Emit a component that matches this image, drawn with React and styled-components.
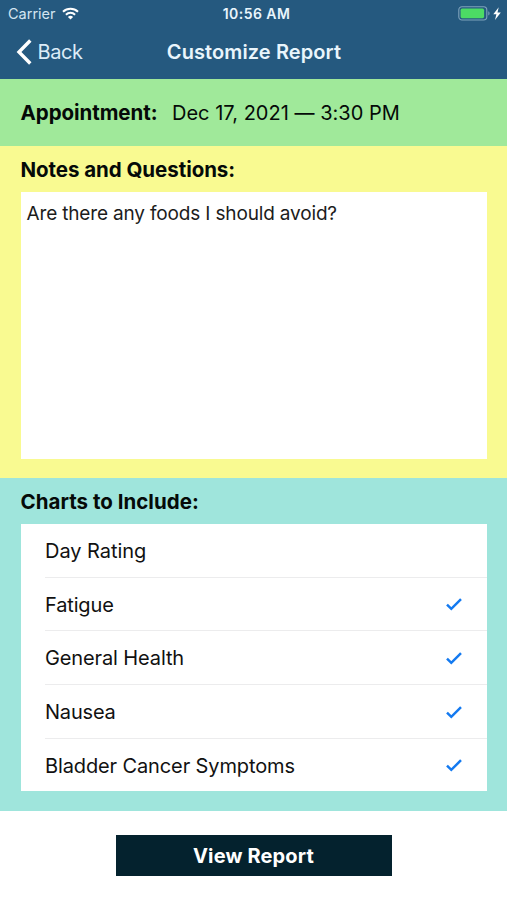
import React from 'react'
import styled, { createGlobalStyle } from 'styled-components'

const GlobalStyle = createGlobalStyle`
  * {
    box-sizing: border-box;
  }

  body {
    margin: 0;
    background: #fff;
    color: #050a08;
    font-family: Inter, 'Liberation Sans', sans-serif;
    font-size: 20px;
  }
`

const Screen = styled.div`
  display: flex;
  flex-direction: column;
  width: 507px;
  height: 900px;
  overflow: hidden;
`

// header
const Header = styled.header`
  height: 79px;
  background: #25597f;
  color: #e9f5fc;
`
const StatusBar = styled.div`
  display: grid;
  grid-template-columns: 1fr auto 1fr;
  align-items: center;
  height: 27px;
  padding: 0 5px 0 8px;
  font-size: 14.5px;
`
const Carrier = styled.div`
  display: flex;
  align-items: center;
  gap: 6px;
  color: #d3e5f1;
  letter-spacing: 0;
`
const Clock = styled.div`
  padding-left: 3px;
  font-weight: 600;
  font-size: 14px;
  letter-spacing: 0.45px;
`
const Power = styled.div`
  display: flex;
  justify-content: flex-end;
`
const NavBar = styled.div`
  display: grid;
  grid-template-columns: 1fr auto 1fr;
  align-items: center;
  height: 50px;
  padding: 0 16px;
`
const BackButton = styled.button`
  display: flex;
  align-items: center;
  gap: 5.5px;
  padding: 0;
  border: 0;
  background: none;
  color: #dcecf7;
  font: inherit;
  letter-spacing: -0.4px;
`
const Title = styled.h1`
  margin: 0;
  padding-left: 1px;
  font-size: 20px;
  font-weight: 600;
  letter-spacing: 0.1px;
`

// sections
const Band = styled.section`
  height: ${p => p.$height}px;
  padding: 0 20px 0 20.5px;
  background: ${p => p.$color};
`
const AppointmentBand = styled(Band)`
  display: flex;
  align-items: center;
  gap: 14.5px;
`
const Heading = styled.h2`
  margin: 0;
  padding-top: 1.5px;
  font-size: 20.5px;
  font-weight: 700;
  line-height: 44px;
  letter-spacing: ${p => p.$tracking || 0}px;
  white-space: nowrap;
`
const AppointmentDate = styled.span`
  letter-spacing: 0.02px;
  white-space: nowrap;
`
const Notes = styled.div`
  height: 267.5px;
  padding: 9px 6px;
  background: #fff;
  color: #1c1c1c;
  font-size: 19px;
  line-height: 25px;
  letter-spacing: -0.16px;
`

// chart list
const ChartList = styled.ul`
  height: 267.5px;
  margin: 0;
  padding: 0 0 0 24.5px;
  overflow: hidden;
  list-style: none;
  background: #fff;
`
const ChartRow = styled.li`
  display: flex;
  align-items: center;
  justify-content: space-between;
  height: 53.8px;
  padding: 1px 25.5px 0 0;
  border-bottom: 1.5px solid #ececed;
  color: #111;
  letter-spacing: ${p => p.$tracking}px;

  &:last-child {
    border-color: transparent;
  }
`

const Footer = styled.footer`
  display: flex;
  justify-content: center;
  padding-top: 24.5px;
`
const ReportButton = styled.button`
  width: 276px;
  height: 40.5px;
  padding: 0;
  border: 0;
  background: #04222e;
  color: #fff;
  font: inherit;
  font-weight: 700;
  letter-spacing: 0.15px;
`

const WifiIcon = () => (
  <svg width='17' height='13' viewBox='0 0 17 13' fill='none' stroke='#fff' strokeWidth='2'>
    <path d='M1 4.7a10.8 10.8 0 0 1 15 0' />
    <path d='M3.9 7.7a6.7 6.7 0 0 1 9.2 0' />
    <path d='M8.5 12.6 5.9 9.9a3.8 3.8 0 0 1 5.2 0z' fill='#fff' stroke='none' />
  </svg>
)

const BatteryIcon = () => (
  <svg width='44' height='15' viewBox='0 0 44 15' fill='none'>
    <rect x='.8' y='.8' width='28' height='13.2' rx='3.2' stroke='#7fa3bc' strokeWidth='1.1' />
    <rect x='2.6' y='2.6' width='23.5' height='9.6' rx='1.6' fill='#4cdb64' />
    <path d='M30.3 5.3c1.7.6 1.7 3.6 0 4.2z' fill='#7fa3bc' />
    <path d='M40.7 1.2 35.3 8.3h3.1L37 14l5.8-7.4h-3.3z' fill='#fff' />
  </svg>
)

const BackIcon = () => (
  <svg width='16' height='26' viewBox='0 0 16 26' fill='none' stroke='#fff' strokeWidth='3.4'>
    <path d='M14.3 1.5 3 13l11.3 11.5' />
  </svg>
)

const CheckIcon = () => (
  <svg width='16' height='13' viewBox='0 0 16 13' fill='none' stroke='#147af0' strokeWidth='2.5'>
    <path d='M1 6.6 5.3 10.8 15 1.2' />
  </svg>
)

const charts = [
  { name: 'Day Rating', tracking: -0.05 },
  { name: 'Fatigue', tracking: -0.15, checked: true },
  { name: 'General Health', tracking: -0.12, checked: true },
  { name: 'Nausea', tracking: -0.2, checked: true },
  { name: 'Bladder Cancer Symptoms', tracking: -0.12, checked: true }
]

const App = () => {
  return (
    <Screen>
      <GlobalStyle />
      <Header>
        <StatusBar>
          <Carrier>Carrier <WifiIcon /></Carrier>
          <Clock>10:56 AM</Clock>
          <Power><BatteryIcon /></Power>
        </StatusBar>
        <NavBar>
          <BackButton><BackIcon />Back</BackButton>
          <Title>Customize Report</Title>
        </NavBar>
      </Header>
      <AppointmentBand $height={67.4} $color='#a0e99a'>
        <Heading $tracking={-0.05}>Appointment:</Heading>
        <AppointmentDate>Dec 17, 2021 — 3:30 PM</AppointmentDate>
      </AppointmentBand>
      <Band $height={332} $color='#f9fa91'>
        <Heading $tracking={-0.05}>Notes and Questions:</Heading>
        <Notes>Are there any foods I should avoid?</Notes>
      </Band>
      <Band $height={332.4} $color='#9fe5dc'>
        <Heading $tracking={0.02}>Charts to Include:</Heading>
        <ChartList>
          {charts.map(({ name, tracking, checked }) => (
            <ChartRow key={name} $tracking={tracking}>
              {name}
              {checked && <CheckIcon />}
            </ChartRow>
          ))}
        </ChartList>
      </Band>
      <Footer>
        <ReportButton>View Report</ReportButton>
      </Footer>
    </Screen>
  )
}

export default App
